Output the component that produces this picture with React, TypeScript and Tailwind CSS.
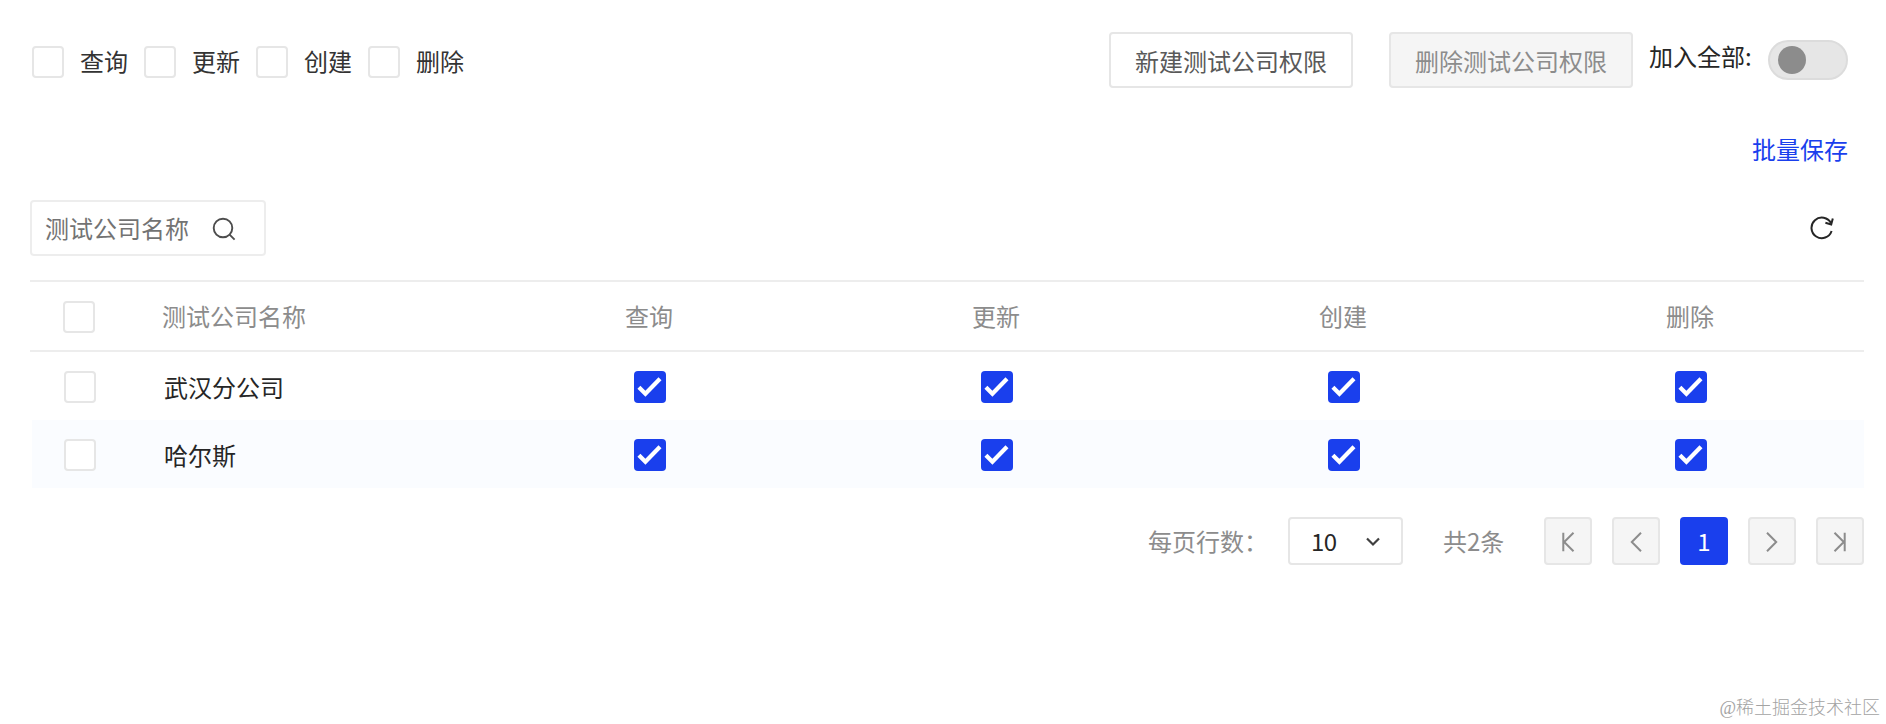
import { useState } from "react";
import type { ReactNode } from "react";

const ACTIONS = ["查询", "更新", "创建", "删除"];

type Company = {
  id: number;
  name: string;
  permissions: boolean[];
};

const COMPANIES: Company[] = [
  { id: 1, name: "武汉分公司", permissions: [true, true, true, true] },
  { id: 2, name: "哈尔斯", permissions: [true, true, true, true] },
];

type CheckboxProps = {
  label: string;
  checked: boolean;
  onChange: () => void;
};

function Checkbox({ label, checked, onChange }: CheckboxProps) {
  return (
    <button
      type="button"
      role="checkbox"
      aria-checked={checked}
      aria-label={label}
      onClick={onChange}
      className={`block size-8 shrink-0 rounded ${
        checked ? "bg-[#1a3fed]" : "border-2 border-[#e6e6e6] bg-white"
      }`}
    >
      {checked && (
        <svg viewBox="0 0 32 32" className="size-8" fill="none" stroke="white" strokeWidth={4.2}>
          <path d="M4.9 16.2L11.4 22.7L26 7.8" />
        </svg>
      )}
    </button>
  );
}

function PageButton({ label, children }: { label: string; children: ReactNode }) {
  return (
    <button
      type="button"
      aria-label={label}
      className="flex size-12 items-center justify-center rounded border-2 border-[#e6e6e6] bg-[#f5f5f5] pt-0.5"
    >
      <svg viewBox="0 0 24 24" className="size-6" fill="none" stroke="#8c8c8c" strokeWidth={2}>
        {children}
      </svg>
    </button>
  );
}

export default function App() {
  const [filters, setFilters] = useState([false, false, false, false]);
  const [companies, setCompanies] = useState(COMPANIES);
  const [selected, setSelected] = useState<number[]>([]);
  const [joinAll, setJoinAll] = useState(false);

  const allSelected = selected.length === companies.length;

  const toggleRow = (id: number) => {
    setSelected((prev) => (prev.includes(id) ? prev.filter((x) => x !== id) : [...prev, id]));
  };

  const togglePermission = (id: number, index: number) => {
    setCompanies((prev) =>
      prev.map((c) =>
        c.id === id ? { ...c, permissions: c.permissions.map((p, i) => (i === index ? !p : p)) } : c
      )
    );
  };

  return (
    <div className="flex h-[724px] w-[1886px] flex-col bg-white pl-[30px] pr-[22px] pt-8 font-['Noto_Sans_CJK_SC',sans-serif] text-2xl leading-8 text-[#262626]">
      <div className="flex h-14 items-start justify-between pl-0.5 pr-4">
        <div className="flex gap-4 pt-[14px]">
          {ACTIONS.map((action, i) => (
            <div key={action} className="flex gap-4 text-[#333]">
              <Checkbox
                label={action}
                checked={filters[i]}
                onChange={() => setFilters((prev) => prev.map((f, j) => (j === i ? !f : f)))}
              />
              <span className="leading-[30px]">{action}</span>
            </div>
          ))}
        </div>
        <div className="flex">
          <button type="button" className="h-14 w-[244px] rounded border-2 border-[#e6e6e6] pt-0.5 text-[#595959]">
            新建测试公司权限
          </button>
          <button
            type="button"
            disabled
            className="ml-9 h-14 w-[244px] rounded border-2 border-[#e6e6e6] bg-[#f5f5f5] pt-0.5 text-[#8c8c8c]"
          >
            删除测试公司权限
          </button>
          <span className="ml-4 mt-2 w-[119px]">加入全部:</span>
          <button
            type="button"
            role="switch"
            aria-checked={joinAll}
            aria-label="加入全部"
            onClick={() => setJoinAll(!joinAll)}
            className={`mt-2 flex h-10 w-20 items-center rounded-full border-2 border-[#dcdcdc] bg-[#e6e6e6] px-2 ${
              joinAll ? "justify-end" : ""
            }`}
          >
            <span className="size-7 rounded-full bg-[#8c8c8c]" />
          </button>
        </div>
      </div>

      <div className="mt-[45px] flex justify-end pr-4">
        <button type="button" className="text-[#1a3fed]">批量保存</button>
      </div>

      <div className="mt-[35px] flex h-14 items-center justify-between pr-[30px]">
        <div className="flex h-14 w-[236px] items-center rounded border-2 border-[#ededed] pl-[13px] text-[#737373]">
          <span className="leading-[34px]">测试公司名称</span>
          <svg viewBox="0 0 24 24" className="ml-[23px] mt-0.5 size-6" fill="none" stroke="#4d4d4d" strokeWidth={1.9}>
            <circle cx="11" cy="11" r="9.3" />
            <path d="M17.6 17.6L22.6 22.6" />
          </svg>
        </div>
        <button type="button" aria-label="刷新">
          <svg viewBox="0 0 24 24" className="size-6" fill="none" stroke="#262626" strokeWidth={2}>
            <path d="M21.6 15A10.3 10.3 0 1 1 21 7.2" />
            <path d="M15.4 6.8L21.2 8.4L22.8 2.4" />
          </svg>
        </button>
      </div>

      <div className="mt-6">
        <div className="grid h-[72px] grid-cols-[132px_314px_repeat(4,347px)] items-center border-y-2 border-[#ededed] text-[#8c8c8c]">
          <div className="pl-[33px] pt-0.5">
            <Checkbox
              label="全选"
              checked={allSelected}
              onChange={() => setSelected(allSelected ? [] : companies.map((c) => c.id))}
            />
          </div>
          <span>测试公司名称</span>
          {ACTIONS.map((action) => (
            <span key={action} className="pr-px text-center">{action}</span>
          ))}
        </div>
        {companies.map((company) => (
          <div
            key={company.id}
            className="ml-0.5 grid h-[68px] grid-cols-[132px_312px_repeat(4,347px)] items-center even:bg-white odd:bg-[#fafcff]"
          >
            <div className="pl-8 pt-0.5">
              <Checkbox
                label={company.name}
                checked={selected.includes(company.id)}
                onChange={() => toggleRow(company.id)}
              />
            </div>
            <span className="pt-0.5">{company.name}</span>
            {company.permissions.map((allowed, i) => (
              <div key={ACTIONS[i]} className="flex justify-center pt-0.5">
                <Checkbox
                  label={company.name + ACTIONS[i]}
                  checked={allowed}
                  onChange={() => togglePermission(company.id, i)}
                />
              </div>
            ))}
          </div>
        ))}
      </div>

      <div className="mt-[29px] flex h-12 items-center justify-end text-[#8c8c8c]">
        <span className="w-[140px]">每页行数：</span>
        <button
          type="button"
          className="flex h-12 w-[115px] items-center rounded border-2 border-[#e6e6e6] pl-[21px] text-[#262626]"
        >
          <span className="w-[55px] text-left tracking-[-0.5px]">10</span>
          <svg viewBox="0 0 14 10" className="mt-0.5 h-2.5 w-3.5" fill="none" stroke="#404040" strokeWidth={2.2}>
            <path d="M1 1.5L7 7.5L13 1.5" />
          </svg>
        </button>
        <span className="ml-10 w-[101px]">共2条</span>
        <div className="flex gap-5">
          <PageButton label="第一页">
            <path d="M7.3 2.8V21.2M17.5 2.8L8.2 12L17.5 21.2" />
          </PageButton>
          <PageButton label="上一页">
            <path d="M17 2.8L7.8 12L17 21.2" />
          </PageButton>
          <button type="button" className="size-12 rounded bg-[#1a3fed] text-white">1</button>
          <PageButton label="下一页">
            <path d="M7 2.8L16.2 12L7 21.2" />
          </PageButton>
          <PageButton label="最后一页">
            <path d="M16.7 2.8V21.2M6.5 2.8L15.8 12L6.5 21.2" />
          </PageButton>
        </div>
      </div>

      <p className="-mr-4 mt-auto pb-[3px] text-right font-['Liberation_Serif','Noto_Sans_CJK_SC',serif] text-lg leading-[26px] font-light text-[#a3a3a3]">
        @稀土掘金技术社区
      </p>
    </div>
  );
}
